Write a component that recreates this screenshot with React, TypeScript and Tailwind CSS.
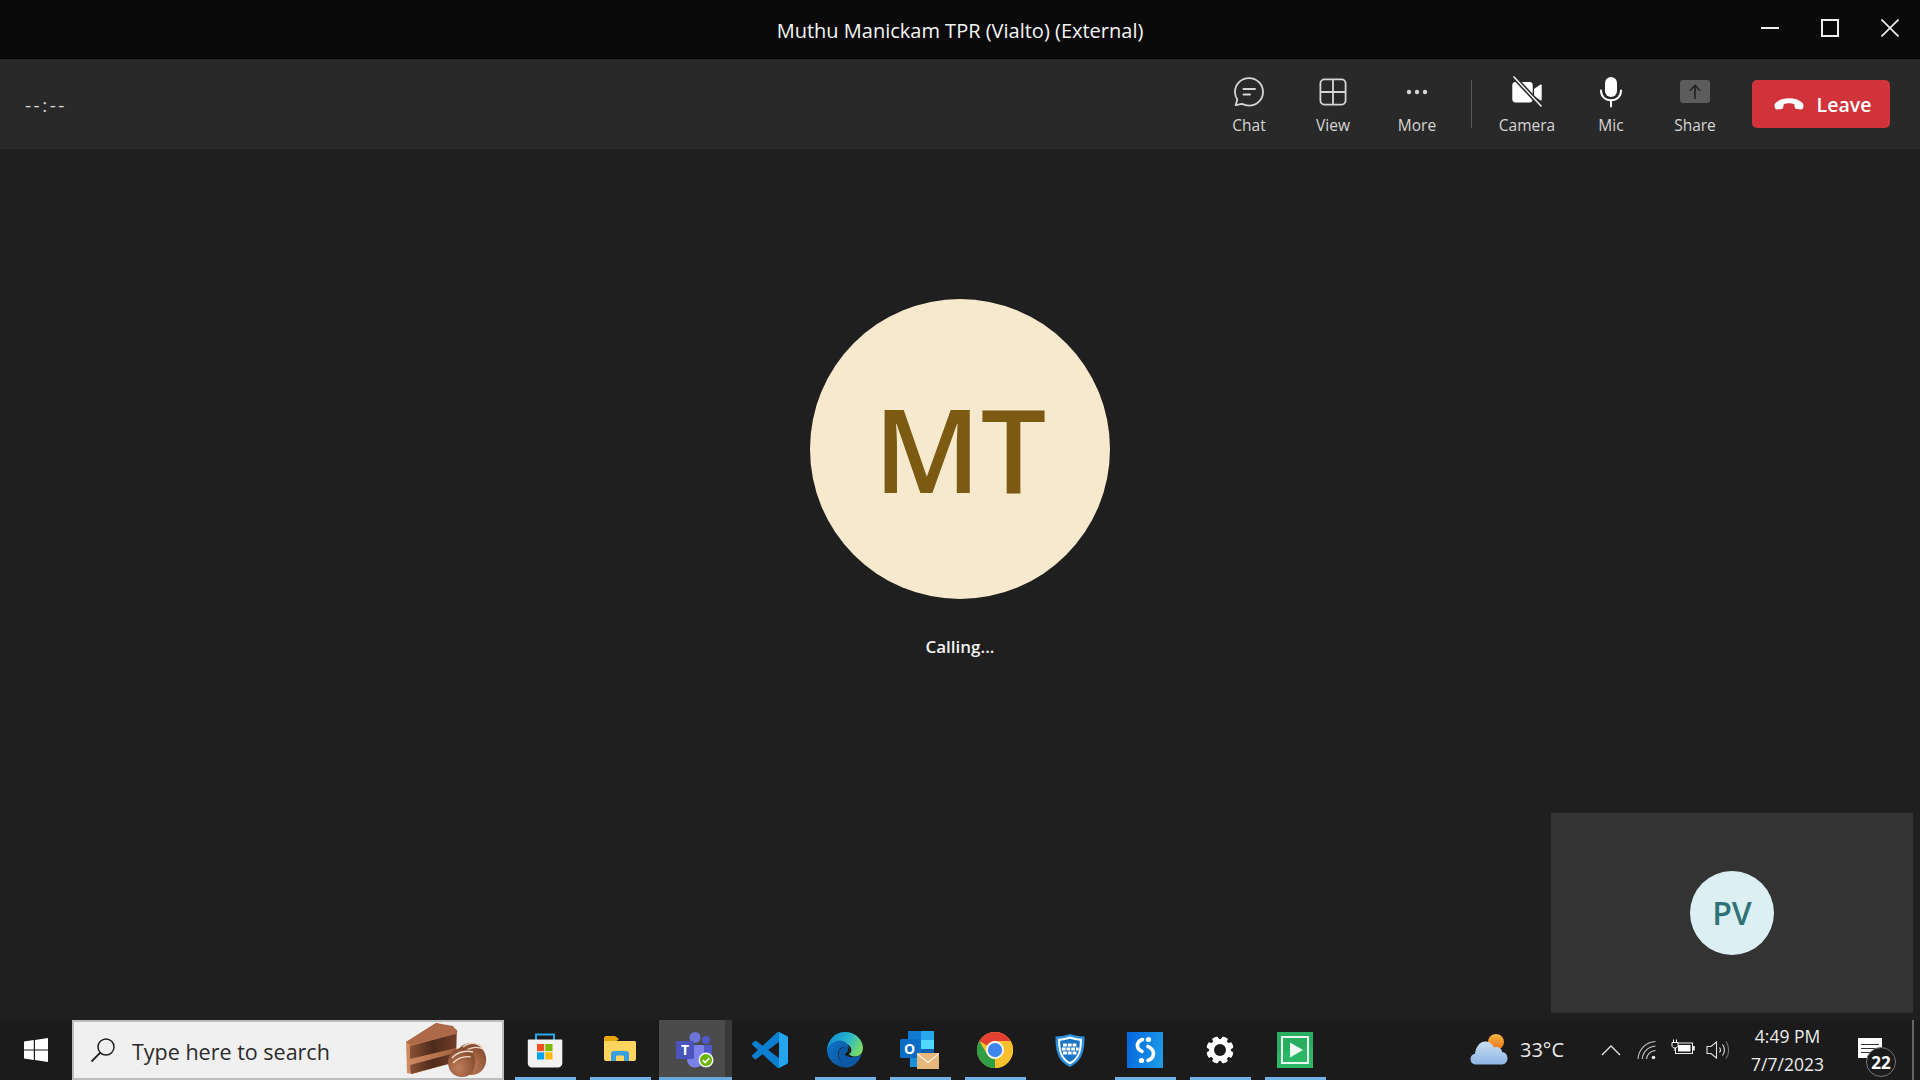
import React from "react";

const ChatIcon = () => (
  <svg width="32" height="32" viewBox="0 0 32 32" fill="none" stroke="#d6d6d6" strokeWidth="1.8" strokeLinecap="round" strokeLinejoin="round">
    <path d="M16 2.2c7.8 0 14 6.1 14 13.7s-6.2 13.8-14 13.8c-2.6 0-5-.7-7.1-1.9l-6.2 1.4 1.6-5.7A13.6 13.6 0 0 1 2 15.9C2 8.3 8.2 2.2 16 2.2z" />
    <path d="M10.5 13h11.5M10.5 18.5h6.5" strokeWidth="2" />
  </svg>
);
const ViewIcon = () => (
  <svg width="28" height="28" viewBox="0 0 28 28" fill="none" stroke="#d6d6d6" strokeWidth="1.8">
    <rect x="1.4" y="1.4" width="25.2" height="25.2" rx="4" />
    <path d="M14 1.4v25.2M1.4 14h25.2" />
  </svg>
);
const MoreIcon = () => (
  <svg width="24" height="8" viewBox="0 0 24 8" fill="#d6d6d6">
    <circle cx="4" cy="4" r="2.2" />
    <circle cx="12" cy="4" r="2.2" />
    <circle cx="20" cy="4" r="2.2" />
  </svg>
);
const CameraIcon = () => (
  <svg width="32" height="32" viewBox="0 0 32 32">
    <path d="M4.5 6h14c2 0 3.2 1.200 3.200 3.200v14c0 2-1.200 3.200-3.200 3.200h-14c-2 0-3.200-1.200-3.200-3.200v-14C1.300 7.200 2.500 6 4.500 6z" fill="#fff" />
    <path d="M23 13l6.500-4.500c.6-.3 1.200 0 1.200.7v14.600c0 .7-.6 1-1.200.7L23 20z" fill="#fff" />
    <path d="M2.500.5l28 30" stroke="#292929" strokeWidth="4.500" />
    <path d="M2.500.5l28 30" stroke="#f4f4f4" strokeWidth="1.500" />
  </svg>
);
const MicIcon = () => (
  <svg width="24" height="32" viewBox="0 0 24 32" fill="none">
    <rect x="6" y="1" width="12" height="20" rx="6" fill="#fff" />
    <path d="M2 14.500c0 6 4 9.800 10 9.800s10-3.800 10-9.800M12 24.500v6" stroke="#fff" strokeWidth="2" strokeLinecap="round" />
  </svg>
);
const ShareIcon = () => (
  <svg width="30" height="24" viewBox="0 0 30 24" fill="none">
    <rect width="30" height="23" rx="3" fill="#5c5c5c" />
    <path d="M15 19V5.500M10 10.500l5-5 5 5" stroke="#242424" strokeWidth="1.700" />
  </svg>
);
const PhoneIcon = () => (
  <svg width="30" height="16" viewBox="0 0 30 16" fill="#fff">
    <path d="M15 1.200c5.500 0 10 1.500 13 4.300 1.500 1.400 1.700 2.600 1.300 4.600-.3 1.600-1 2.600-2.500 2.400l-4-.6c-1.400-.2-2-1-2.200-2.400l-.3-2.200c-1.500-.7-3.400-1-5.300-1s-3.800.3-5.300 1l-.3 2.200c-.2 1.400-.8 2.200-2.200 2.400l-4 .6c-1.500.2-2.200-.8-2.500-2.400-.4-2-.2-3.200 1.300-4.600C5 2.700 9.500 1.200 15 1.200z" />
  </svg>
);

const ToolItem = ({ icon, label }: { icon: React.ReactNode; label: string }) => (
  <div className="w-[84px] h-[90px] pt-[17px] flex flex-col items-center">
    <div className="h-[32px] flex items-center justify-center">{icon}</div>
    <span className="mt-[2px] text-[15.500px] leading-[30px] text-[#d6d6d6]">{label}</span>
  </div>
);

const WinLogo = () => (
  <svg width="24" height="24" viewBox="0 0 24 24" fill="#fff">
    <path d="M0 3.400l9.800-1.300v9.300H0zM11 1.900L24 0v11.400H11zM0 12.600h9.800v9.300L0 20.600zM11 12.600h13V24l-13-1.900z" />
  </svg>
);
const SearchIcon = () => (
  <svg width="26" height="26" viewBox="0 0 26 26" fill="none" stroke="#202020" strokeWidth="1.500">
    <circle cx="16" cy="10" r="8" />
    <path d="M10.300 15.700L1.500 24.500" strokeWidth="1.800" />
  </svg>
);
const Cake = () => (
  <svg width="86" height="56" viewBox="0 0 86 56">
    <defs>
      <linearGradient id="ck1" x1="0" x2="1" y1="0" y2="0">
        <stop offset="0" stopColor="#8a5236" />
        <stop offset="0.5" stopColor="#4e2a1c" />
        <stop offset="1" stopColor="#6c3d28" />
      </linearGradient>
      <linearGradient id="ck2" x1="0" x2="1" y1="0" y2="0">
        <stop offset="0" stopColor="#d08d63" />
        <stop offset="1" stopColor="#a2603e" />
      </linearGradient>
      <radialGradient id="ck3" cx="0.4" cy="0.7" r="0.8">
        <stop offset="0" stopColor="#c07d59" />
        <stop offset="1" stopColor="#7b4429" />
      </radialGradient>
    </defs>
    <path d="M1 20L31 1l17 3 4 6-1 30-44 12-5-1z" fill="url(#ck2)" />
    <path d="M1 20L31 1l20 6c1 1 2 3 1 4L6 23z" fill="#ad6a48" />
    <path d="M5 24l46-12v14L5 37z" fill="url(#ck1)" />
    <path d="M5 43l45-12v9L6 52z" fill="url(#ck1)" />
    <ellipse cx="66" cy="37" rx="15" ry="16" fill="url(#ck3)" transform="rotate(-20 66 37)" />
    <path d="M58 25c6-5 14-5 20 0" stroke="#efd6c2" strokeWidth="1.500" fill="none" />
    <path d="M60 29c5-3 12-5 18-2" stroke="#efd6c2" strokeWidth="1.200" fill="none" />
    <path d="M43 40c0-8 7-14 14-14s13 5 13 14-5 15-13 15-14-6-14-15z" fill="url(#ck3)" />
    <path d="M47 36c5-6 14-8 21-6" stroke="#f0dcc9" strokeWidth="1.500" fill="none" />
    <path d="M48 41c5-5 12-7 18-6" stroke="#f0dcc9" strokeWidth="1.200" fill="none" />
  </svg>
);

const StoreIcon = () => (
  <svg width="36" height="36" viewBox="0 0 36 36">
    <path d="M9 8V2.500h18V8" fill="none" stroke="#28a8ea" strokeWidth="2" />
    <path d="M1.500 7.500h33c.5 0 .8.300.8.800v23c0 2.500-2 4.200-4.300 4.200H5c-2.300 0-4.200-1.700-4.200-4.200V8.300c0-.5.300-.8.700-.8z" fill="#f2f2f2" />
    <rect x="10" y="12" width="7.200" height="7.200" fill="#f25022" />
    <rect x="18.300" y="12" width="7.200" height="7.200" fill="#7fba00" />
    <rect x="10" y="20.300" width="7.200" height="7.200" fill="#00a4ef" />
    <rect x="18.300" y="20.300" width="7.200" height="7.200" fill="#ffb900" />
  </svg>
);
const FolderIcon = () => (
  <svg width="34" height="30" viewBox="0 0 34 30">
    <path d="M1 3c0-1 .8-2 2-2h9l4 3-3 2.500H1z" fill="#e8a80c" />
    <path d="M1 6h30.500c1 0 1.500.8 1.500 1.500V24c0 1-.8 2-2 2H3c-1 0-2-1-2-2z" fill="#fdd55f" />
    <path d="M8 26v-7c0-2 1-3 3-3h12c2 0 3 1 3 3v7h-5v-4c0-1-.5-1.500-1.500-1.500h-5c-1 0-1.500.5-1.500 1.500v4z" fill="#3b9ee0" />
  </svg>
);
const TeamsIcon = () => (
  <svg width="38" height="36" viewBox="0 0 38 36">
    <circle cx="19" cy="5.500" r="5.500" fill="#6d75d6" />
    <circle cx="30" cy="8" r="4" fill="#5059c9" />
    <path d="M24 13h10.500c1 0 1.500.5 1.500 1.500v9c0 3-2.500 5-6 5H24z" fill="#5059c9" />
    <path d="M11 13h15.500c1 0 1.500.7 1.500 1.500V26c0 5.500-4 9.500-9 9.500s-8-3.500-8-9z" fill="#7b83eb" />
    <rect x="0" y="9" width="18" height="18" rx="1.500" fill="#4b53bc" />
    <text x="9" y="23" textAnchor="middle" fontFamily="'Open Sans',sans-serif" fontWeight="700" fontSize="14" fill="#fff">T</text>
    <circle cx="30" cy="28" r="7.500" fill="#f4f4f4" />
    <circle cx="30" cy="28" r="6" fill="#6bb700" />
    <path d="M26.800 28.200l2.300 2.300 4.200-4.400" fill="none" stroke="#fff" strokeWidth="1.700" />
  </svg>
);
const VSCodeIcon = () => (
  <svg width="36" height="36" viewBox="0 0 24 24">
    <path d="M23.150 2.587L18.210.21a1.494 1.494 0 0 0-1.705.29l-9.460 8.630-4.120-3.128a.999.999 0 0 0-1.276.057L.327 7.261A1 1 0 0 0 .326 8.740L3.899 12 .326 15.260a1 1 0 0 0 .001 1.479L1.650 17.940a.999.999 0 0 0 1.276.057l4.120-3.128 9.460 8.630a1.492 1.492 0 0 0 1.704.29l4.942-2.377A1.500 1.500 0 0 0 24 20.060V3.939a1.500 1.500 0 0 0-.850-1.352zm-5.146 14.861L10.826 12l7.178-5.448v10.896z" fill="#0a7fd0" />
    <path d="M18 .1c.1 0 .150.05.210.110l4.940 2.377A1.500 1.500 0 0 1 24 3.939v16.120a1.500 1.500 0 0 1-.850 1.352l-4.940 2.377c-.060.030-.130.060-.210.080V17.400l.004.048V6.552L18 6.500z" fill="#24a5f0" />
  </svg>
);
const EdgeIcon = () => (
  <svg width="36" height="36" viewBox="0 0 36 36">
    <defs>
      <linearGradient id="ed1" x1="0" y1="0.2" x2="1" y2="0.6">
        <stop offset="0" stopColor="#0c8bd8" />
        <stop offset="0.55" stopColor="#2bb7c9" />
        <stop offset="1" stopColor="#7ddb62" />
      </linearGradient>
      <linearGradient id="ed2" x1="0" y1="0" x2="1" y2="1">
        <stop offset="0" stopColor="#0e74c8" />
        <stop offset="1" stopColor="#0d4f9b" />
      </linearGradient>
    </defs>
    <path d="M18 0c10 0 18 7.500 18 16 0 5-3.500 8.500-8 8.500-3 0-5.500-1.200-6-2.500 2-1 3-3 2-6-1-3-4.500-5-8.500-4.500C9 12.500 4 17.500 0 19 0 8 8 0 18 0z" fill="url(#ed1)" />
    <path d="M0 18c1-4 7-10 13-9.500 5 .4 9 4 9 7.500-4-2.500-9-1-10.500 3-1.800 5 1.500 12 9.500 16.500C9 36 0 28 0 18z" fill="url(#ed2)" />
    <path d="M12 19c1-3 5-5 9-3.500.8 3-1 5.500-3.500 6.500 1.500 2.500 5 3.500 9.500 3 2.500-.3 5.500-1.300 7.500-3-2 7.500-8 13-14 13.500-6.500-3-10-11-8.500-16.500z" fill="#0c5aa6" />
  </svg>
);
const OutlookIcon = () => (
  <svg width="40" height="40" viewBox="0 0 40 40">
    <rect x="8" y="1" width="26" height="27" rx="2" fill="#0a5fae" />
    <rect x="8" y="1" width="13" height="9" fill="#0f7ad0" />
    <rect x="21" y="1" width="13" height="9" fill="#28a8ea" />
    <rect x="21" y="10" width="13" height="9" fill="#50d9ff" />
    <rect x="8" y="10" width="13" height="18" fill="#0a74c7" />
    <rect x="10" y="28" width="24" height="9" fill="#1490df" />
    <rect x="0" y="9" width="19" height="19" rx="1.500" fill="#0a6cc2" />
    <text x="9.500" y="24" textAnchor="middle" fontFamily="'Open Sans',sans-serif" fontWeight="700" fontSize="14" fill="#fff">O</text>
    <rect x="17" y="23" width="22" height="16" fill="#e7b67a" />
    <path d="M17.500 24l10.500 8.500 10.500-8.500" fill="none" stroke="#fbeedd" strokeWidth="1.500" />
  </svg>
);
const ChromeIcon = () => {
  const d = "M24 0A24 24 0 0 1 44.800 12H24A12 12 0 0 0 13.600 18L3.200 12A24 24 0 0 1 24 0Z";
  return (
    <svg width="36" height="36" viewBox="0 0 48 48">
      <circle cx="24" cy="24" r="24" fill="#fbc02d" />
      <path d={d} fill="#e53f33" />
      <path d={d} fill="#fbc02d" transform="rotate(120 24 24)" />
      <path d={d} fill="#2f9e44" transform="rotate(240 24 24)" />
      <circle cx="24" cy="24" r="12" fill="#f4f4f4" />
      <circle cx="24" cy="24" r="9.500" fill="#3f86ec" />
    </svg>
  );
};
const ShieldIcon = () => (
  <svg width="30" height="34" viewBox="0 0 30 34">
    <path d="M15 1c4 1.500 9 2.500 14.500 2.500 0 12-1 24-14.500 30.500C1.500 27.500.5 15.500.5 3.500 6 3.500 11 2.500 15 1z" fill="#2a8fdc" />
    <path d="M15 3.500c3.500 1.200 8 2 12 2.200 0 10-1.200 20-12 25.800C4.200 25.700 3 15.700 3 5.700c4-.2 8.500-1 12-2.200z" fill="#f4fafe" />
    <path d="M15 5.800c3.300 1 6.700 1.700 9.800 2 0 9-1.300 16.500-9.800 21.300C6.500 24.300 5.200 16.800 5.200 7.800c3.100-.3 6.500-1 9.800-2z" fill="#1a75c4" />
    <g fill="#fff">
      <rect x="8" y="10.500" width="3.800" height="3" /><rect x="12.800" y="10.500" width="3.800" height="3" /><rect x="17.600" y="10.500" width="3.800" height="3" />
      <rect x="6.800" y="14.500" width="3.800" height="3" /><rect x="11.500" y="14.500" width="3.800" height="3" /><rect x="16.200" y="14.500" width="3.800" height="3" /><rect x="20.900" y="14.500" width="2.800" height="3" />
      <rect x="8" y="18.500" width="3.800" height="3" /><rect x="12.800" y="18.500" width="3.800" height="3" /><rect x="17.600" y="18.500" width="3.800" height="3" />
    </g>
  </svg>
);
const SIcon = () => (
  <svg width="36" height="36" viewBox="0 0 36 36">
    <defs>
      <linearGradient id="si1" x1="0" y1="0.4" x2="1" y2="0.6">
        <stop offset="0" stopColor="#0569e0" />
        <stop offset="1" stopColor="#1d9ae8" />
      </linearGradient>
    </defs>
    <rect width="36" height="36" fill="url(#si1)" />
    <circle cx="21.500" cy="7.500" r="2.600" fill="#fff" />
    <circle cx="14.500" cy="28.500" r="2.600" fill="#fff" />
    <path d="M15.500 7.500c-4 1.500-5.500 4-5 7 .4 2.500 2.500 4 4.500 4.800" fill="none" stroke="#fff" strokeWidth="3.600" strokeLinecap="round" />
    <path d="M21 14.500c3 1.500 5.500 3.500 5.500 6.800 0 3.500-2 6-5.500 7.200" fill="none" stroke="#fff" strokeWidth="3.600" strokeLinecap="round" />
  </svg>
);
const GearIcon = () => {
  const teeth = [0, 45, 90, 135, 180, 225, 270, 315];
  return (
    <svg width="28" height="28" viewBox="0 0 28 28">
      {teeth.map((a) => (
        <rect key={a} x="11" y="0.500" width="6" height="27" rx="1.500" fill="#fff" transform={`rotate(${a + 22.5} 14 14)`} />
      ))}
      <circle cx="14" cy="14" r="8.500" fill="none" stroke="#fff" strokeWidth="5" />
      <circle cx="14" cy="14" r="6" fill="#1b1b1b" />
    </svg>
  );
};
const PlayIcon = () => (
  <svg width="36" height="36" viewBox="0 0 36 36">
    <rect width="36" height="36" fill="#27ae60" />
    <path d="M0 22l36-8v22H0z" fill="#2bb866" />
    <rect x="5" y="5" width="26" height="26" fill="none" stroke="#e8f8ee" strokeWidth="2" />
    <path d="M13 10.500l13 7.500-13 7.500z" fill="#f0faf3" />
  </svg>
);

const TaskCell = ({ children, pinned = true, active = false }: { children: React.ReactNode; pinned?: boolean; active?: boolean }) => (
  <div className="relative w-[75px] h-[60px] flex items-center justify-center">
    {active && (
      <>
        <div className="absolute inset-y-0 left-[2px] right-[7px] bg-[#4b4b4b]" />
        <div className="absolute inset-y-0 right-0 w-[7px] bg-[#393939]" />
      </>
    )}
    <div className="relative flex items-center justify-center -mt-[1px]">{children}</div>
    {pinned && (
      <div className={active ? "absolute bottom-0 left-[2px] right-0 h-[3px] bg-[#68a9e0]" : "absolute bottom-0 left-[8px] right-[6px] h-[3px] bg-[#6fb3ea]"} />
    )}
  </div>
);

const WeatherIcon = () => (
  <svg width="38" height="32" viewBox="0 0 38 32">
    <defs>
      <linearGradient id="sun" x1="0" y1="0" x2="0" y2="1">
        <stop offset="0" stopColor="#fbb640" />
        <stop offset="1" stopColor="#e8701c" />
      </linearGradient>
      <linearGradient id="cld" x1="0" y1="0" x2="0" y2="1">
        <stop offset="0" stopColor="#c9dcf2" />
        <stop offset="1" stopColor="#8eb7e6" />
      </linearGradient>
    </defs>
    <circle cx="26" cy="8" r="8" fill="url(#sun)" />
    <path d="M6 30.500c-3.500 0-5.500-2.500-5.500-5.500 0-2.800 2-4.800 4.500-5.200C5.500 14 9.500 7.500 15 7.500c4.500 0 7.500 2.500 9 6 .8-.3 1.500-.4 2.300-.4 3.200 0 5.400 2.200 5.900 5.200 3-.2 5.300 2.500 5.300 6 0 3.200-2 6.200-5.500 6.200z" fill="url(#cld)" />
  </svg>
);
const ChevronUp = () => (
  <svg width="20" height="12" viewBox="0 0 20 12" fill="none" stroke="#e6e6e6" strokeWidth="1.300">
    <path d="M1 11l9-9 9 9" />
  </svg>
);
const WifiIcon = () => (
  <svg width="20" height="20" viewBox="0 0 20 20" fill="none" stroke="#c8c8c8" strokeWidth="1.100">
    <path d="M1 19C1.500 9.500 9 2 18.500 1.500M5.200 19c.5-6.800 6-12.500 13.300-13M9.500 19c.5-4.500 4-8.200 9-8.500" />
    <circle cx="16.500" cy="17.500" r="1.800" fill="#e6e6e6" stroke="none" />
  </svg>
);
const BatteryIcon = () => (
  <svg width="24" height="16" viewBox="0 0 24 16" fill="none">
    <rect x="4.500" y="4" width="17" height="10.500" stroke="#eee" strokeWidth="1" />
    <rect x="7" y="6" width="12.500" height="6.500" fill="#fff" />
    <rect x="22" y="7" width="1.800" height="4.500" fill="#eee" />
    <path d="M1 3.500h6v3c0 1.500-1.200 2.500-3 2.500S1 8 1 6.500zM2.500 3.500V.5M5.500 3.500V.5M4 9v3" stroke="#fff" strokeWidth="1" fill="#1b1b1b" />
  </svg>
);
const VolumeIcon = () => (
  <svg width="24" height="20" viewBox="0 0 24 20" fill="none" stroke="#e0e0e0" strokeWidth="1.100">
    <path d="M1 6.500h4L10.500 2v16L5 13.500H1z" />
    <path d="M13.500 7.500c1.200 1.500 1.200 3.500 0 5" />
    <path d="M16.500 4.500c2.500 3 2.500 8 0 11" />
    <path d="M20 1.500c3.500 4.500 3.500 12.500 0 17" stroke="#777" />
  </svg>
);

export default function App() {
  return (
    <div className="w-[1920px] h-[1080px] overflow-hidden flex flex-col bg-[#1f1f1f] text-white font-['Open_Sans',sans-serif]">
      <header className="h-[59px] shrink-0 border-b border-black bg-[#0a0a0a] grid grid-cols-[1fr_auto_1fr] items-center">
        <div />
        <h1 className="text-[20px] font-normal leading-[58px] pt-[2px] text-[#f5f5f5]">Muthu Manickam TPR (Vialto) (External)</h1>
        <div className="flex justify-end items-center h-[56px] self-start">
          <div className="w-[60px] flex justify-center"><div className="w-[18px] h-[2px] bg-[#f0f0f0]" /></div>
          <div className="w-[60px] flex justify-center"><div className="w-[18px] h-[18px] border-2 border-[#f0f0f0]" /></div>
          <div className="w-[60px] flex justify-center">
            <svg width="18" height="18" viewBox="0 0 18 18" stroke="#f0f0f0" strokeWidth="1.600"><path d="M.5.5l17 17M17.500.5l-17 17" /></svg>
          </div>
        </div>
      </header>

      <div className="h-[90px] shrink-0 bg-[#292929] flex items-center">
        <span className="pl-[25px] pt-[2px] text-[19px] tracking-[2.500px] text-[#d4d4d4]">--:--</span>
        <div className="ml-auto flex items-center">
          <ToolItem icon={<ChatIcon />} label="Chat" />
          <ToolItem icon={<ViewIcon />} label="View" />
          <ToolItem icon={<MoreIcon />} label="More" />
          <div className="w-[1px] h-[48px] ml-[12px] mr-[13px] bg-[#5a5a5a]" />
          <ToolItem icon={<CameraIcon />} label="Camera" />
          <ToolItem icon={<MicIcon />} label="Mic" />
          <ToolItem icon={<ShareIcon />} label="Share" />
          <button className="ml-[15px] mr-[30px] w-[138px] h-[48px] pt-[1px] pl-[3px] rounded-[5px] bg-[#d0343a] flex items-center justify-center gap-[13px] text-[19.500px] font-semibold text-white">
            <PhoneIcon />
            <span>Leave</span>
          </button>
        </div>
      </div>

      <main className="relative flex-1 flex flex-col items-center pt-[150px]">
        <div className="w-[300px] h-[300px] pb-[3px] rounded-full bg-[#f7e9cd] flex items-center justify-center text-[116px] font-semibold leading-none text-[#7c5a12]">
          MT
        </div>
        <p className="mt-[36px] text-[17px] font-semibold leading-[24px] text-[#f2f2f2]">Calling...</p>
        <div className="absolute right-[7px] bottom-[7px] w-[362px] h-[200px] bg-[#333333] flex items-center justify-center">
          <div className="w-[84px] h-[84px] rounded-full bg-[#dcf0f4] flex items-center justify-center text-[32px] font-semibold leading-none text-[#2f7377]">
            PV
          </div>
        </div>
      </main>

      <footer className="h-[60px] shrink-0 bg-[#1b1b1b] flex items-stretch">
        <div className="w-[72px] flex items-center justify-center -mt-[1px]"><WinLogo /></div>
        <div className="w-[432px] h-[60px] border-2 border-[#bdbdbd] bg-[#f0f0f0] flex items-center relative">
          <div className="ml-[16px]"><SearchIcon /></div>
          <span className="ml-[16px] pt-[4px] text-[21.500px] text-[#2b2b2b] leading-none">Type here to search</span>
          <div className="ml-auto mr-[11px]"><Cake /></div>
        </div>
        <div className="ml-[3px] flex">
          <TaskCell><StoreIcon /></TaskCell>
          <TaskCell><FolderIcon /></TaskCell>
          <TaskCell active><TeamsIcon /></TaskCell>
          <TaskCell pinned={false}><VSCodeIcon /></TaskCell>
          <TaskCell><EdgeIcon /></TaskCell>
          <TaskCell><OutlookIcon /></TaskCell>
          <TaskCell><ChromeIcon /></TaskCell>
          <TaskCell pinned={false}><ShieldIcon /></TaskCell>
          <TaskCell><SIcon /></TaskCell>
          <TaskCell><GearIcon /></TaskCell>
          <TaskCell><PlayIcon /></TaskCell>
        </div>
        <div className="ml-auto flex items-center h-[60px]">
          <div className="w-[38px] flex justify-center"><WeatherIcon /></div>
          <span className="w-[84px] pl-[12px] text-[20px] text-[#eaeaea]">33°C</span>
          <div className="w-[37px] flex justify-center"><ChevronUp /></div>
          <div className="w-[36px] flex justify-center"><WifiIcon /></div>
          <div className="w-[35px] flex justify-center -mt-[6px]"><BatteryIcon /></div>
          <div className="w-[35px] flex justify-center"><VolumeIcon /></div>
          <div className="w-[105px] flex flex-col items-center text-[17.500px] leading-[28px] text-[#ececec]">
            <span>4:49 PM</span>
            <span>7/7/2023</span>
          </div>
          <div className="w-[80px] relative h-[60px] flex items-start pl-[18px] pt-[18px]">
            <div className="relative w-[24px] h-[20px] bg-white flex flex-col justify-center gap-[3px] px-[3px]">
              <div className="h-[1px] bg-[#333]" />
              <div className="h-[1px] bg-[#333]" />
              <div className="h-[1px] bg-[#333]" />
            </div>
            <div className="absolute left-[26px] top-[27px] w-[30px] h-[30px] rounded-full border border-[#777] bg-[#1b1b1b] flex items-center justify-center text-[17px] font-bold text-white leading-none">
              22
            </div>
            <div className="absolute right-[6px] top-0 bottom-0 w-[2px] bg-[#666]" />
          </div>
        </div>
      </footer>
    </div>
  );
}
